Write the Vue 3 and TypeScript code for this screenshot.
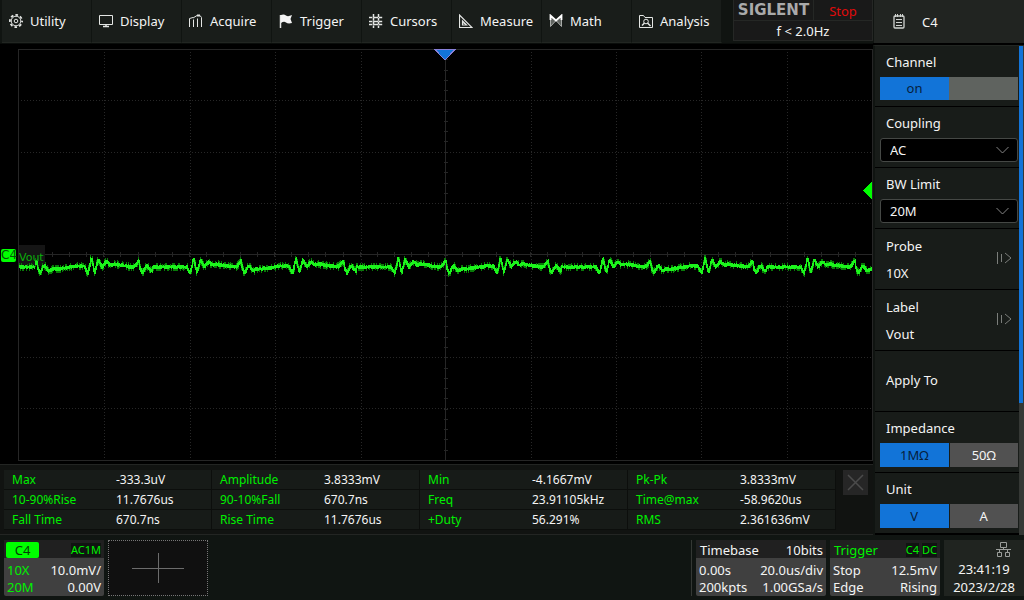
<script setup lang="ts">
import { ref } from 'vue'

interface Reading {
  name: string
  value: string
}

const menu: string[] = ['Utility', 'Display', 'Acquire', 'Trigger', 'Cursors', 'Measure', 'Math', 'Analysis']

const readings: Reading[][] = [
  [
    { name: 'Max', value: '-333.3uV' },
    { name: 'Amplitude', value: '3.8333mV' },
    { name: 'Min', value: '-4.1667mV' },
    { name: 'Pk-Pk', value: '3.8333mV' },
  ],
  [
    { name: '10-90%Rise', value: '11.7676us' },
    { name: '90-10%Fall', value: '670.7ns' },
    { name: 'Freq', value: '23.91105kHz' },
    { name: 'Time@max', value: '-58.9620us' },
  ],
  [
    { name: 'Fall Time', value: '670.7ns' },
    { name: 'Rise Time', value: '11.7676us' },
    { name: '+Duty', value: '56.291%' },
    { name: 'RMS', value: '2.361636mV' },
  ],
]

const coupling = ref('AC')
const bwLimit = ref('20M')
const channelOn = ref(true)
const impedance = ref('1MΩ')
const unit = ref('V')

// Graticule: 10 x 8 divisions
const left = 18
const right = 872
const top = 5
const bottom = 416
const midX = 445
const midY = 211
const columns = [104, 190, 275, 361, 531, 616, 701, 787]
const rows = [56, 108, 159, 262, 313, 364]
const ticksX = Array.from({ length: 49 }, (_, i) => Math.round(left + ((i + 1) * (right - left)) / 50))
const ticksY = Array.from({ length: 39 }, (_, i) => Math.round(top + ((i + 1) * (bottom - top)) / 40))

// One ripple period: [offset, level]
const period = 102.3
const shape: [number, number][] = [
  [0, 229], [2, 226], [3, 223], [5, 222], [7, 225], [9, 227], [12, 225], [17, 225], [24, 224],
  [36, 222], [44, 222], [46, 226], [48, 229], [50, 221], [51, 215], [52, 216], [54, 226], [55, 228],
  [57, 220], [58, 216], [59, 217], [62, 223], [65, 219], [67, 218], [70, 221], [74, 220], [79, 221],
  [86, 222], [92, 223], [95, 222], [98, 218], [99, 217], [100, 224], [102.3, 229],
]

function level(x: number): number {
  const cycle = Math.floor((x - 40) / period)
  const p = x - 40 - cycle * period
  // every second cycle settles on a flat level before the large spike
  if (cycle % 2 !== 0 && p > 10 && p < 45) return 223
  for (let i = 1; i < shape.length; i++) {
    const [x1, y1] = shape[i]
    if (p <= x1) {
      const [x0, y0] = shape[i - 1]
      return y0 + ((p - x0) / (x1 - x0)) * (y1 - y0)
    }
  }
  return 223
}

function noise(n: number): number {
  const v = Math.sin(n * 12.9898) * 43758.5453
  return v - Math.floor(v)
}

let bright = ''
let faint = ''
for (let x = 19; x < 872; x++) {
  const a = x < 35 ? 223 : level(x)
  const b = x < 35 ? 223 : level(x + 1)
  const y0 = Math.round(Math.min(a, b) - 1.2 - noise(x))
  const y1 = Math.round(Math.max(a, b) + 1.2 + noise(x + 500))
  bright += `M${x} ${y0}h1V${y1}h-1z`
  const up = noise(x + 90) > 0.6 ? 2 : 0
  const down = noise(x + 270) > 0.6 ? 2 : 0
  faint += `M${x} ${y0 - up}h1V${y1 + down}h-1z`
}
</script>

<template>
  <div class="scope">
    <header class="topbar">
      <nav class="menu">
        <button v-for="item in menu" :key="item" type="button" class="menu-item">
          <svg class="icon" width="14" height="14" viewBox="0 0 14 14" fill="none" stroke="#e4e6e4" aria-hidden="true">
            <g v-if="item === 'Utility'">
              <circle cx="7" cy="7" r="4.8" />
              <circle cx="7" cy="7" r="6.1" stroke-width="1.8" stroke-dasharray="2.6 2.19" stroke-dashoffset="1.3" />
              <circle cx="7" cy="7" r="1.8" />
            </g>
            <g v-else-if="item === 'Display'">
              <path d="M.5 1.5h13v9H.5z" />
              <path d="M7 10.5v2M4 12.5h6" stroke-width="1.5" />
            </g>
            <g v-else-if="item === 'Acquire'">
              <path d="M.5 13V4.5L4 3.500M4.500 13V5.500M8.500 13V4.500M12.500 13V3.500L11 1.500 8 1.500 4 4" />
              <path d="M8 1.500h3" stroke-width="2" />
            </g>
            <g v-else-if="item === 'Trigger'">
              <path d="M1.500 1v13" stroke-width="1.500" />
              <path d="M2 1q3-1 5 .5t6-.5L11.500 5l1.500 4q-4 1-6-.5T2 9z" fill="#f4f4f4" stroke="none" />
            </g>
            <g v-else-if="item === 'Cursors'">
              <path d="M4.500 0v14M9.500 0v14" stroke-width="1.500" stroke-dasharray="3 .8" />
              <path d="M0 3.500h14M0 7.500h14M0 10.500h14" stroke-width="1.300" stroke-dasharray="3.400 .8 4.800 .8" />
            </g>
            <g v-else-if="item === 'Measure'">
              <path d="M.5 1v12.500h12.500zM3.500 7v4h4z" stroke-width="1.200" />
              <path d="M5 9l2 2M3 9h2" />
            </g>
            <g v-else-if="item === 'Math'">
              <path d="M1.500 1.500L7 6.500 1.500 12.500zM12.500 1.500L7 6.500l5.500 6z" fill="#5f635f" stroke="#a8aba8" />
              <path d="M1.500 6V1.500L7 6.500l5.500-5V6" stroke="#fff" stroke-width="1.800" />
            </g>
            <g v-else>
              <path d="M.5 1.500h4l1.500 2h7.500v10H.5z" />
              <circle cx="7" cy="7.500" r="2.300" />
              <path d="M8.500 9l3 3M3 11.500l2.500-2.500" stroke-width="1.500" />
            </g>
          </svg>
          <span>{{ item }}</span>
        </button>
      </nav>
      <div class="status">
        <strong class="brand">SIGLENT</strong>
        <span class="run-state">Stop</span>
        <span class="frequency">f &lt; 2.0Hz</span>
      </div>
    </header>

    <h1 class="side-title">
      <svg width="12" height="15" viewBox="0 0 12 15" fill="none" stroke="#d0d3d0" aria-hidden="true">
        <rect x="1" y="2" width="10" height="12" rx="1" stroke-width="1.300" />
        <path d="M3 5.500h6M3 8.500h6M3 11.500h6" />
        <path d="M2.500 0v3M4.500 0v3M7.500 0v3M9.500 0v3" />
      </svg>
      <span>C4</span>
    </h1>

    <main class="plot">
      <svg class="trace" viewBox="0 0 873 420" preserveAspectRatio="none" shape-rendering="crispEdges" role="img" aria-label="Channel 4 waveform">
        <g fill="none" stroke="#272727" stroke-dasharray="1 2">
          <path v-for="x in columns" :key="'c' + x" :d="`M${x}.5 ${top}V${bottom}`" />
          <path v-for="y in rows" :key="'r' + y" :d="`M${left} ${y}.5H${right}`" />
        </g>
        <g fill="none" stroke="#262626">
          <path :d="`M${left}.5 ${top}.5H${right}.5V${bottom}.5H${left}.5z`" />
          <path :d="`M${left} ${midY - 1}.5H${right}M${midX}.5 ${top}V${bottom}`" />
          <path v-for="x in ticksX" :key="'x' + x" :d="`M${x}.5 ${midY - 3}v5`" />
          <path v-for="y in ticksY" :key="'y' + y" :d="`M${midX - 1} ${y}.5h4`" />
        </g>
        <path d="M19 201h26v21H19z" fill="#151515" />
        <path :d="faint" fill="#087a08" />
        <path :d="bright" fill="#1cf51c" />
        <path d="M435 5.500h20L445 16z" fill="#1274d8" stroke="#8880d8" />
        <path d="M872 138v17l-9-8.500z" fill="#0f0" />
      </svg>
      <span class="channel-tag">C4</span>
      <span class="channel-label">Vout</span>
    </main>

    <section class="readings" aria-label="Measurements">
      <table>
        <tbody>
          <tr v-for="(row, i) in readings" :key="i">
            <template v-for="cell in row" :key="cell.name">
              <th scope="row">{{ cell.name }}</th>
              <td>{{ cell.value }}</td>
            </template>
          </tr>
        </tbody>
      </table>
      <button type="button" class="close" aria-label="Close measurements">
        <svg width="17" height="17" viewBox="0 0 17 17" stroke="#4b4b4b" stroke-width="1.500" aria-hidden="true">
          <path d="M1 1l15 15M16 1L1 16" />
        </svg>
      </button>
    </section>

    <aside class="side">
      <div class="settings">
        <div class="setting">
          <span class="caption">Channel</span>
          <button type="button" class="switch" :aria-pressed="channelOn" @click="channelOn = !channelOn">
            <span class="switch-on">on</span>
          </button>
        </div>
        <div class="setting">
          <label class="caption" for="coupling">Coupling</label>
          <div class="drop">
            <select id="coupling" v-model="coupling">
              <option>AC</option>
              <option>DC</option>
              <option>GND</option>
            </select>
            <svg class="chevron" width="13" height="8" viewBox="0 0 13 8" fill="none" stroke="#858585" aria-hidden="true"><path d="M.5 1l6 6 6-6" /></svg>
          </div>
        </div>
        <div class="setting">
          <label class="caption" for="bw">BW Limit</label>
          <div class="drop">
            <select id="bw" v-model="bwLimit">
              <option>20M</option>
              <option>200M</option>
              <option>Full</option>
            </select>
            <svg class="chevron" width="13" height="8" viewBox="0 0 13 8" fill="none" stroke="#858585" aria-hidden="true"><path d="M.5 1l6 6 6-6" /></svg>
          </div>
        </div>
        <button type="button" class="setting link">
          <span class="pair"><span>Probe</span><span>10X</span></span>
          <svg width="15" height="12" viewBox="0 0 15 12" fill="none" stroke="#7b7e7b" aria-hidden="true"><path d="M.5 0v12M4.500 2v8M8 1l6 5-6 5" /></svg>
        </button>
        <button type="button" class="setting link">
          <span class="pair"><span>Label</span><span>Vout</span></span>
          <svg width="15" height="12" viewBox="0 0 15 12" fill="none" stroke="#7b7e7b" aria-hidden="true"><path d="M.5 0v12M4.500 2v8M8 1l6 5-6 5" /></svg>
        </button>
        <button type="button" class="setting link">
          <span>Apply To</span>
        </button>
        <div class="setting">
          <span class="caption">Impedance</span>
          <div class="choice">
            <button v-for="o in ['1MΩ', '50Ω']" :key="o" type="button" :class="{ active: impedance === o }" @click="impedance = o">{{ o }}</button>
          </div>
        </div>
        <div class="setting">
          <span class="caption">Unit</span>
          <div class="choice">
            <button v-for="o in ['V', 'A']" :key="o" type="button" :class="{ active: unit === o }" @click="unit = o">{{ o }}</button>
          </div>
        </div>
      </div>
      <div class="scroll"><div class="thumb"></div></div>
    </aside>

    <footer class="bottom">
      <button type="button" class="card channel">
        <span class="card-head"><span class="chip">C4</span><span class="tag">AC1M</span></span>
        <span class="line"><span class="green">10X</span><span>10.0mV/</span></span>
        <span class="line"><span class="green">20M</span><span>0.00V</span></span>
      </button>
      <button type="button" class="add" aria-label="Add trace">
        <svg width="52" height="30" viewBox="0 0 52 30" stroke="#6c6c6c" aria-hidden="true"><path d="M0 15.500h52M26.500 0v30" /></svg>
      </button>
      <div class="divider"></div>
      <button type="button" class="card timebase">
        <span class="card-head"><span>Timebase</span><span>10bits</span></span>
        <span class="line"><span>0.00s</span><span>20.0us/div</span></span>
        <span class="line"><span>200kpts</span><span>1.00GSa/s</span></span>
      </button>
      <button type="button" class="card trigger">
        <span class="card-head green"><span>Trigger</span><span class="tags"><span class="tag">C4</span><span class="tag">DC</span></span></span>
        <span class="line"><span>Stop</span><span>12.5mV</span></span>
        <span class="line"><span>Edge</span><span>Rising</span></span>
      </button>
      <div class="clock">
        <svg class="lan" width="15" height="15" viewBox="0 0 15 15" fill="none" stroke="#9b9e9b" aria-hidden="true">
          <path d="M4.500.5h6v5h-6zM1.500 10.500h4v4h-4zM9.500 10.500h4v4h-4zM7.500 5.500v2M0 7.500h15M3.500 7.500v3M11.500 7.500v3" />
        </svg>
        <time>23:41:19</time>
        <time>2023/2/28</time>
      </div>
    </footer>
  </div>
</template>

<style>
body {
  background: #000;
}
</style>

<style scoped>
.scope {
  display: grid;
  grid-template-columns: minmax(0, 1fr) 151px;
  grid-template-rows: auto minmax(0, 1fr) auto auto;
  min-height: 100vh;
  background: #000;
  color: #f4f4f4;
  font: 13px/18px "Noto Sans", "Open Sans", sans-serif;
}
*,
*::before {
  box-sizing: border-box;
}
button,
select {
  margin: 0;
  padding: 0;
  border: 0;
  border-radius: 0;
  background: none;
  color: inherit;
  font: inherit;
  cursor: pointer;
}
svg {
  display: block;
  flex: none;
}
.green {
  color: #00f000;
}
.topbar {
  display: flex;
  justify-content: space-between;
  height: 44px;
  padding-left: 2px;
  background: #101411;
  border-bottom: 1px solid #0a0d0b;
}
.menu {
  display: flex;
}
.menu-item {
  display: flex;
  align-items: center;
  gap: 7px;
  width: 90px;
  padding: 0 0 1px 7px;
  background: #191d1a;
  border-right: 1px solid #101411;
  border-bottom: 1px solid #222622;
  white-space: nowrap;
}
.status {
  display: grid;
  grid-template-columns: 80px 58px;
  grid-template-rows: 20px 20px;
  align-self: start;
  background: #191919;
  border: 1px solid #252725;
  border-top: 0;
  text-align: center;
  line-height: 20px;
}
.brand {
  color: #aaa;
  font: bold 15px/20px "DejaVu Sans", sans-serif;
  border-right: 1px solid #252725;
}
.run-state {
  color: #e00b0b;
  line-height: 23px;
}
.frequency {
  grid-column: 1 / 3;
  border-top: 1px solid #252725;
  line-height: 21px;
}
.side-title {
  display: flex;
  align-items: center;
  gap: 17px;
  height: 43px;
  margin: 0;
  padding-left: 19px;
  border-left: 1px solid #101411;
  background: #212421;
  font: inherit;
}
.plot {
  position: relative;
  min-height: 420px;
}
.trace {
  width: 100%;
  height: 100%;
}
.channel-tag,
.channel-label {
  position: absolute;
  top: 50%;
  font: 12px/13px "DejaVu Sans", sans-serif;
}
.channel-tag {
  left: 1px;
  width: 15px;
  margin-top: -5px;
  border-radius: 2px;
  background: #0f0;
  color: #064d06;
  text-align: center;
}
.channel-label {
  left: 19px;
  margin-top: -3px;
  color: #0bb00b;
  font-size: 11px;
}
.readings {
  display: flex;
  gap: 7px;
  height: 71px;
  padding: 5px 5px 0 4px;
  border-top: 1px solid #232523;
  border-bottom: 1px solid #232523;
  background: #111311;
}
.readings table {
  flex: 1;
  width: 100%;
  table-layout: fixed;
  border-collapse: separate;
  border-spacing: 0;
  height: 60px;
  font-size: 12px;
}
.readings th,
.readings td {
  height: 20px;
  padding: 0 0 0 8px;
  background: #171b18;
  border-bottom: 1px solid #0c0e0c;
  font-weight: normal;
  text-align: left;
}
.readings th {
  color: #00f000;
}
.readings td {
  border-right: 1px solid #0c0e0c;
}
.close {
  display: grid;
  flex: none;
  place-items: center;
  width: 25px;
  height: 25px;
  background: #262626;
}
.side {
  grid-column: 2;
  grid-row: 2 / 4;
  display: flex;
  margin-top: 1px;
  border-left: 2px solid #101411;
  border-top: 1px solid #222622;
}
.settings {
  flex: 1;
}
.setting {
  display: block;
  width: 100%;
  height: 61px;
  padding: 0 1px 0 5px;
  background: #181c19;
  border-bottom: 1px solid #000;
}
.caption {
  display: block;
  padding: 7px 0 6px 6px;
}
.switch {
  display: block;
  width: 100%;
  height: 23px;
  background: #5f635f;
  line-height: 23px;
}
.switch-on {
  display: block;
  width: 50%;
  background: #1274d8;
  color: #06203c;
}
.drop {
  display: grid;
  align-items: center;
}
.drop select,
.chevron {
  grid-area: 1 / 1;
}
.drop select {
  appearance: none;
  width: 100%;
  height: 24px;
  padding-left: 9px;
  border: 1px solid #454845;
  border-radius: 3px;
  background: #000;
}
.chevron {
  justify-self: end;
  margin-right: 9px;
  pointer-events: none;
}
.link {
  display: flex;
  align-items: center;
  justify-content: space-between;
  padding: 0 7px 3px 11px;
  text-align: left;
}
.pair {
  display: flex;
  flex-direction: column;
  gap: 9px;
  padding-top: 4px;
}
.choice {
  display: grid;
  grid-template-columns: 1fr 1fr;
  gap: 1px;
}
.choice button {
  height: 24px;
  background: #515151;
}
.choice .active {
  background: #1274d8;
  color: #06203c;
}
.scroll {
  width: 5px;
  padding-right: 1px;
  background: #353835;
}
.thumb {
  height: 73%;
  background: #1274d8;
}
.bottom {
  grid-column: 1 / 3;
  display: flex;
  gap: 4px;
  height: 65px;
  padding: 5px 0 4px 4px;
  background: #101512;
}
.card {
  display: flex;
  flex-direction: column;
  background: #404040;
  border-radius: 2px;
  text-align: left;
  line-height: 17px;
}
.card-head {
  display: flex;
  align-items: center;
  justify-content: space-between;
  height: 18px;
  margin-bottom: 4px;
  padding: 2px 3px 0 4px;
  background: #202020;
}
.line {
  display: flex;
  justify-content: space-between;
  padding: 0 3px;
}
.channel {
  width: 100px;
}
.channel .card-head {
  padding-left: 2px;
}
.chip {
  width: 33px;
  height: 16px;
  border-radius: 2px;
  background: #0f0;
  color: #063d06;
  text-align: center;
  line-height: 16px;
}
.tags {
  display: flex;
  gap: 3px;
}
.tag {
  background: #101411;
  color: #00f000;
  font-size: 11px;
  line-height: 14px;
}
.add {
  display: grid;
  place-items: center;
  width: 100px;
  background: #101010;
  border: 1px dotted #777;
}
.divider {
  width: 1px;
  margin-left: auto;
  background: #343834;
}
.timebase {
  width: 130px;
}
.trigger {
  width: 110px;
}
.clock {
  display: flex;
  flex-direction: column;
  align-items: center;
  width: 80px;
  padding-top: 2px;
  background: #202420;
}
.lan {
  align-self: flex-end;
  margin: 0 13px 3px 0;
}
</style>
